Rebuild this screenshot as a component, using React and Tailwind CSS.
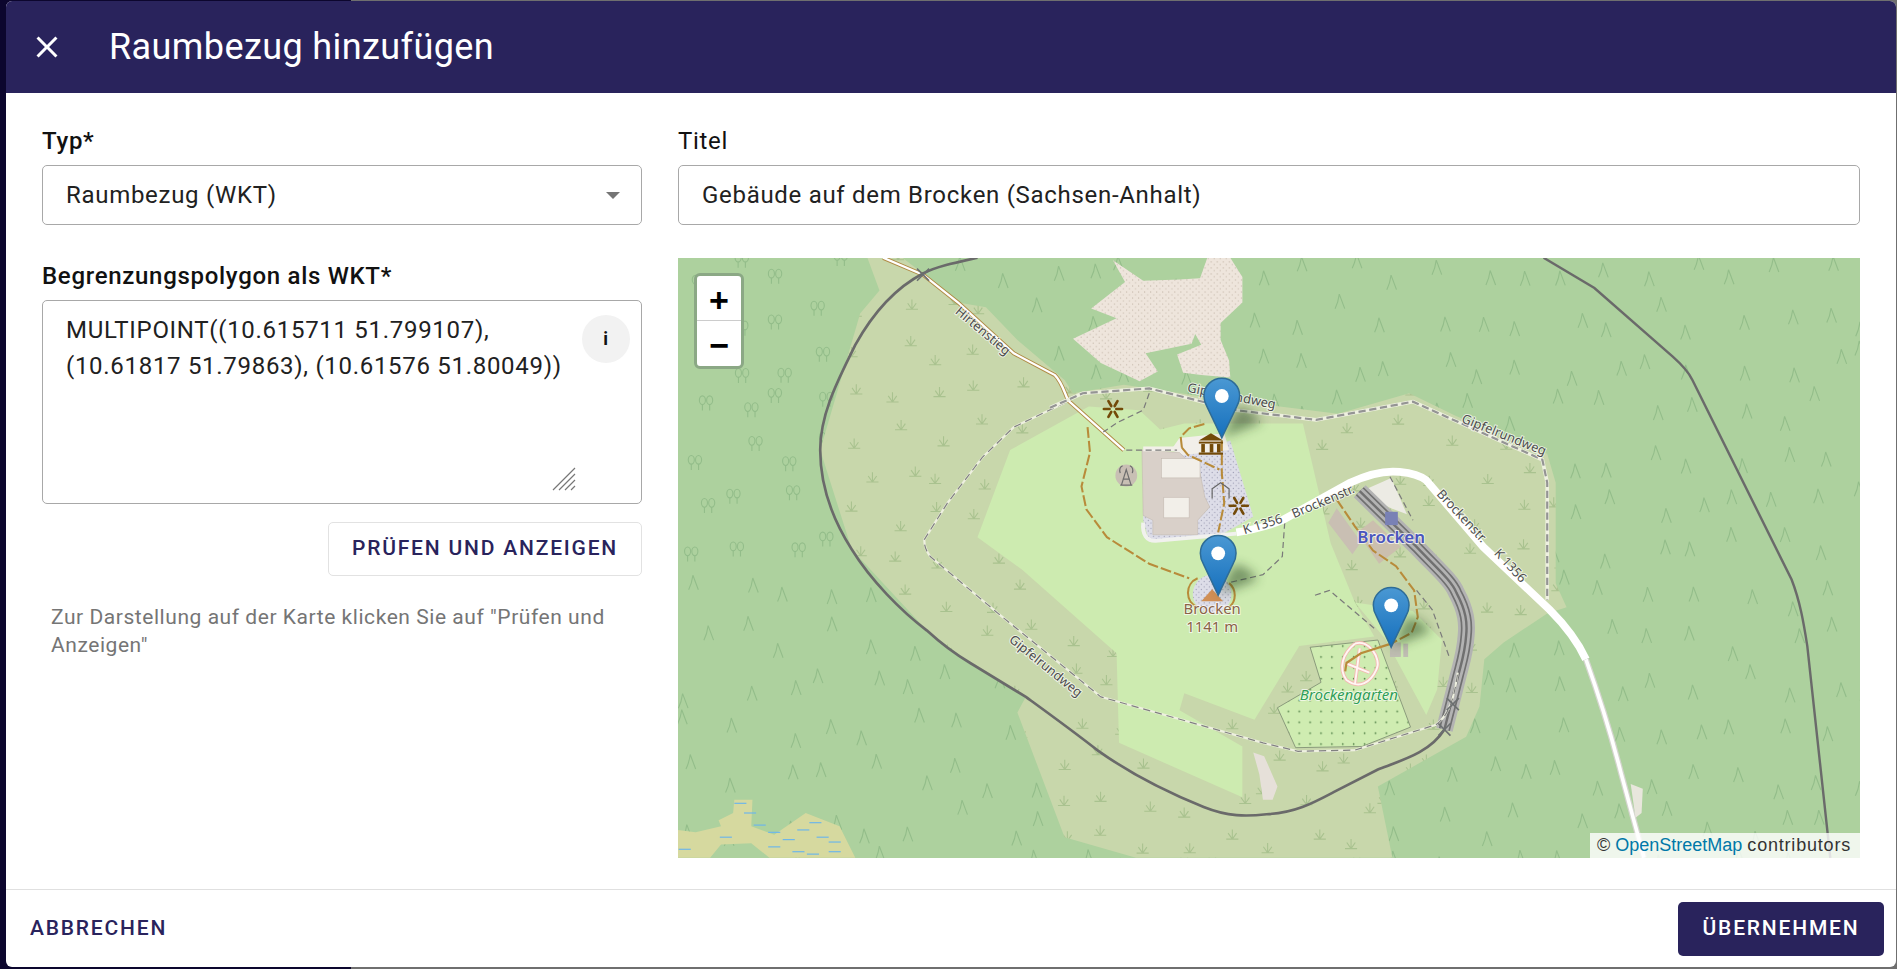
const rnd = (i, j, k) => {
  const s = Math.sin(i * 127.1 + j * 311.7 + k * 74.7) * 43758.5453;
  return s - Math.floor(s);
};

// scattered symbols of the forest and heath fill
const scatter = (stepX, stepY, seed) => {
  const out = [];
  for (let i = 0; i < 30; i++) {
    for (let j = 0; j < 15; j++) {
      out.push({
        key: i + '-' + j,
        x: 560 + i * stepX + rnd(i, j, seed) * stepX * 0.7,
        y: 205 + j * stepY + rnd(i, j, seed + 1) * stepY * 0.7,
      });
    }
  }
  return out;
};

const forest = scatter(36, 38, 1);
const heath = scatter(34, 34, 5);

const HEATH = '717,213 746,213 763,226 792,250 815,254 841,281 880,314 887,325 929,318 995,328 1058,336 1106,342 1165,325 1204,344 1279,375 1286,399 1286,482 1295,502 1279,507 1243,531 1227,545 1223,584 1212,609 1139,650 1151,709 939,709 880,692 841,589 848,576 802,548 766,521 704,454 678,372 707,273 711,259 727,240';
const ROCK = '920,215 930,233 902,255 923,263 887,280 910,300 942,315 957,307 947,292 985,284 988,276 993,285 973,293 978,308 993,310 1017,312 1016,298 1009,281 1009,267 1027,250 1027,229 1017,213 998,213 992,230 975,231 945,232';
const LIGHT = '835,372 900,336 942,339 959,355 979,350 1077,350 1100,449 1120,498 1136,526 1074,534 1037,595 979,573 975,587 1027,617 1027,659 925,614 923,540 845,471 808,444';
const BUILDING = '944,372 975,374 992,391 996,411 1000,419 990,430 990,442 953,442 953,430 945,426';
const PLAZA = '986,375 1017,364 1036,427 1006,444 950,448 945,430 945,372';
const GARDEN = '1083,535 1139,529 1166,601 1126,617 1071,618 1056,585 1092,564';

const BOUNDARY_W = 'M808 213 C790 217 775 220 763 226 C740 238 722 258 707 285 C695 310 678 340 678 372 C678 405 690 432 704 454 C720 480 745 505 766 521 C778 532 790 541 802 548 L848 576 C870 592 888 605 907 620 C935 640 965 655 995 667 C1015 675 1030 675 1047 673 C1070 672 1085 664 1102 655 L1139 636 C1160 628 1182 622 1194 603';
const BOUNDARY_E = 'M1276 213 L1318 238 L1383 295 C1392 303 1396 308 1399 314 L1481 479 C1488 497 1491 515 1494 534 L1513 709';
const RAIL = 'M1124 406 L1171 452 C1188 470 1200 480 1204 490 C1212 505 1213 515 1212 525 C1211 540 1208 548 1205 560 L1194 603';
const ROAD_A = 'M1022 440 C1035 438 1045 436 1060 430 L1116 399 C1135 390 1148 389 1157 390 C1168 391 1174 393 1179 397 L1226 452 L1281 504 C1295 518 1305 532 1311 545';
const ROAD_B = 'M1311 545 C1320 570 1330 600 1340 639 L1359 709';
const TRACK = 'M730 213 L763 227 L792 250 L838 292 L872 310 C878 316 880 325 883 331 L929 372';
const LOOP = 'M880 333 L838 353 L812 378 L783 416 L764 446 C764 452 766 456 769 460 L825 507 L910 576 L1044 614 L1073 621 L1120 620 L1187 599 C1200 590 1203 570 1205 556';
const NORTH = 'M868 337 L895 325 L950 321 L1022 339 L1088 347 L1168 332 L1275 380 L1279 399 L1279 496';
const GREY_PATHS = 'M950 325 L945 339 L924 349 L912 357 M931 372 L973 372 M1062 432 L1060 460 L1044 475 L1014 482 M1087 492 L1099 488 L1138 521 M1171 488 L1184 504 L1198 543 M1149 394 L1168 430';
const BROWN = 'M899 353 L901 374 L894 402 L898 421 L915 444 L950 466 L983 478 M977 370 L976 361 L983 354 L997 350 M977 370 L982 376 L1008 388 M1010 364 L1010 391 L1012 416 L1007 440 M1105 413 L1120 435 L1135 455 L1154 468 L1169 488 L1172 510 L1167 523 L1150 532';
const GARDEN_PATHS = 'M1120 532 C1132 528 1142 545 1138 553 C1133 564 1124 570 1113 562 C1106 552 1110 540 1120 532 M1112 548 L1132 556 M1124 536 L1120 566';

function Pin({ x, y, id }) {
  return (
    <g transform={`translate(${x - 15.5} ${y - 50.2}) scale(1.24)`}>
      <path d="M12.5 40.5 L23 20 C30 20 36 26 39 30 Z" fill="#24421f" opacity="0.5" filter="url(#blur)" />
      <path
        d="M12.5 .6C5.9 .6 .6 5.9 .6 12.5C.6 15 1.3 17.4 2.6 19.6L12.5 40.4L22.4 19.6C23.7 17.4 24.4 15 24.4 12.5C24.4 5.9 19.1 .6 12.5 .6Z"
        fill={`url(#${id})`}
        stroke="#2e6c97"
        strokeWidth="1"
      />
      <circle cx="12.5" cy="12.5" r="4.6" fill="#fff" />
    </g>
  );
}

function Star({ x, y }) {
  return (
    <g transform={`translate(${x} ${y})`} stroke="#734a08" strokeWidth="2.2" strokeLinecap="round">
      {[0, 60, 120, 180, 240, 300].map((a) => (
        <line key={a} x1="0" y1="-2.8" x2="0" y2="-7.5" transform={`rotate(${a + 30})`} />
      ))}
    </g>
  );
}

function Cross({ x, y }) {
  return (
    <g stroke="#6b6f70" strokeWidth="1.3">
      <line x1={x - 5} y1={y - 5} x2={x + 5} y2={y + 5} />
      <line x1={x - 5} y1={y + 5} x2={x + 5} y2={y - 5} />
    </g>
  );
}

function Label({ x, y, r = 0, children, size = 10.6, fill = '#4d4d4d', weight = 400, italic = false }) {
  return (
    <text
      transform={`translate(${x} ${y}) rotate(${r})`}
      textAnchor="middle"
      dominantBaseline="middle"
      fontFamily="'Noto Sans', 'DejaVu Sans', sans-serif"
      fontSize={size}
      fontWeight={weight}
      fontStyle={italic ? 'italic' : 'normal'}
      fill={fill}
      stroke="#ffffff"
      strokeOpacity="0.7"
      strokeWidth="1.6"
      paintOrder="stroke"
    >
      {children}
    </text>
  );
}

function MapDrawing() {
  return (
    <svg viewBox="560.5 213.2 977 496" className="block w-full h-full">
      <defs>
        <linearGradient id="pinA" x1="0" y1="0" x2="0" y2="1">
          <stop offset="0" stopColor="#4a98d3" />
          <stop offset="1" stopColor="#1670bd" />
        </linearGradient>
        <filter id="blur" x="-50%" y="-50%" width="200%" height="200%"><feGaussianBlur stdDeviation="3.4" /></filter>
        <pattern id="rockDots" width="5" height="5" patternUnits="userSpaceOnUse">
          <rect width="5" height="5" fill="#eee5dc" />
          <circle cx="1.2" cy="1.4" r="0.45" fill="#b9ab9b" />
          <circle cx="3.7" cy="3.6" r="0.45" fill="#b9ab9b" />
        </pattern>
        <pattern id="plazaDots" width="4.4" height="4.4" patternUnits="userSpaceOnUse">
          <rect width="4.4" height="4.4" fill="#dddde8" />
          <circle cx="1" cy="1.1" r="0.5" fill="#9c9cb3" />
          <circle cx="3.2" cy="3.3" r="0.5" fill="#9c9cb3" />
        </pattern>
        <pattern id="gardenDots" width="9" height="9" patternUnits="userSpaceOnUse">
          <rect width="9" height="9" fill="#cfecb1" />
          <circle cx="3" cy="3" r="0.7" fill="#4f7f45" />
        </pattern>
        <clipPath id="heathClip"><polygon points={HEATH} /></clipPath>
      </defs>

      <rect x="560" y="213" width="978" height="497" fill="#add19e" />

      {forest.map((p) =>
        p.x < 722 && p.y < 455 ? (
          <g key={p.key} transform={`translate(${p.x} ${p.y})`} fill="none" stroke="#93bd8a" strokeWidth="0.9">
            <ellipse cx="3" cy="3.6" rx="2.5" ry="3.6" />
            <ellipse cx="9" cy="3.6" rx="2.5" ry="3.6" />
            <path d="M3 7 V12 M9 7 V12" />
          </g>
        ) : (
          <path key={p.key} d={`M${p.x} ${p.y + 12} C${p.x + 2} ${p.y + 8} ${p.x + 3} ${p.y + 4} ${p.x + 3.5} ${p.y} L${p.x + 8} ${p.y + 12}`} fill="none" stroke="#93bd8a" strokeWidth="0.9" />
        )
      )}

      <polygon points={HEATH} fill="#c8d7ab" />
      <g clipPath="url(#heathClip)" fill="none" stroke="#a9c28f" strokeWidth="0.9">
        {heath.map((p) => (
          <path key={p.key} d={`M${p.x} ${p.y + 8} H${p.x + 10} M${p.x + 5} ${p.y + 8} V${p.y} M${p.x + 5} ${p.y + 8} L${p.x + 1.5} ${p.y + 3} M${p.x + 5} ${p.y + 8} L${p.x + 8.5} ${p.y + 3}`} />
        ))}
      </g>
      <polygon points={LIGHT} fill="#cdebb0" />
      <polygon points="1120,498 1168,505 1192,529 1188,570 1179,591 1145,528" fill="#cdebb0" />
      <polygon points={ROCK} fill="url(#rockDots)" />

      {/* wetland, bottom left */}
      <polygon points="607,661 622,661 621,683 640,690 666,672 694,683 707,709 636,709 621,697 596,698 587,709 560,709 560,686 575,688 596,683 594,678 606,672" fill="#d6d99f" />
      <g stroke="#6fb7e8" strokeWidth="1">
        {[[612, 664], [620, 672], [628, 682], [640, 688], [652, 694], [664, 686], [674, 680], [680, 692], [690, 696], [660, 704], [640, 700], [672, 706], [566, 702], [600, 692], [690, 704]].map(([x, y]) => (
          <line key={x + '-' + y} x1={x - 5} y1={y} x2={x + 5} y2={y} />
        ))}
      </g>

      {/* summit area, station and buildings */}
      <polygon points={PLAZA} fill="url(#plazaDots)" />
      <polygon points="975,362 1012,358 1016,372 978,376 968,372" fill="#f2efe9" />
      <polygon points={BUILDING} fill="#d9d0c9" stroke="#c4bab1" strokeWidth="0.5" />
      <rect x="945" y="369" width="30" height="4" fill="#f2efe9" />
      <rect x="960" y="379" width="32" height="16" fill="#f2efe9" stroke="#c4bab1" strokeWidth="0.5" />
      <rect x="962" y="411" width="21" height="17" fill="#f2efe9" stroke="#c4bab1" strokeWidth="0.5" />
      <path d="M945 432 C944 442 948 447 955 447 L1022 441" fill="none" stroke="#f1f1ee" strokeWidth="3.2" />
      <circle cx="1002" cy="491" r="16" fill="url(#plazaDots)" />
      <polygon points="1123,407 1150,395 1163,425 1150,420" fill="#ecebe4" />
      <polygon points="1105,420 1125,448 1118,458 1098,432" fill="#c9bfb3" />
      <polygon points="1135,430 1158,452 1140,466 1122,440" fill="#cbbfae" />

      <polygon points={GARDEN} fill="url(#gardenDots)" stroke="#7e8d72" strokeWidth="0.7" />
      <path d={GARDEN_PATHS} fill="none" stroke="#f3b9b1" strokeWidth="3" />
      <path d={GARDEN_PATHS} fill="none" stroke="#fff6f4" strokeWidth="1.6" />
      <polygon points="1036,622 1045,625 1056,650 1052,661 1044,661 1041,640" fill="#e6e0d9" />
      <rect x="1149" y="531" width="9" height="12" fill="#bfbdb2" />
      <rect x="1160" y="532" width="4" height="11" fill="#bfbdb2" />

      {/* railway */}
      <path d={RAIL} fill="none" stroke="#b3b3b3" strokeWidth="14" />
      <path d={RAIL} fill="none" stroke="#707070" strokeWidth="9.4" />
      <path d={RAIL} fill="none" stroke="#b3b3b3" strokeWidth="6.6" />
      <path d={RAIL} fill="none" stroke="#707070" strokeWidth="2" />

      {/* ways */}
      <path d={TRACK} fill="none" stroke="#b08a45" strokeWidth="3.4" />
      <path d={TRACK} fill="none" stroke="#ffffff" strokeWidth="1.9" />
      <path d={BOUNDARY_W} fill="none" stroke="#6a6a6a" strokeWidth="2.2" />
      <path d={BOUNDARY_E} fill="none" stroke="#6a6a6a" strokeWidth="2" />
      <path d={LOOP} fill="none" stroke="#eef0e0" strokeWidth="1.8" />
      <path d={LOOP} fill="none" stroke="#808080" strokeWidth="1" strokeDasharray="6 4" />
      <path d={NORTH} fill="none" stroke="#eef0e0" strokeWidth="3" />
      <path d={NORTH} fill="none" stroke="#949494" strokeWidth="1.8" strokeDasharray="6 3" />
      <path d={GREY_PATHS} fill="none" stroke="#7a7a7a" strokeWidth="1" strokeDasharray="5 3" />
      <path d={BROWN} fill="none" stroke="#b88b3a" strokeWidth="1.7" strokeDasharray="9 2.5" />
      <path d="M990 478 A13 13 0 0 0 990 502 M1016 482 A13 13 0 0 1 1016 502" fill="none" stroke="#b88b3a" strokeWidth="1.7" />
      <path d="M1150 532 L1125 540 L1113 548 L1112 555" fill="none" stroke="#b88b3a" strokeWidth="1.8" />
      <path d={ROAD_A} fill="none" stroke="#ffffff" strokeWidth="6.4" />
      <path d={ROAD_B} fill="none" stroke="#d5d5cf" strokeWidth="5" />
      <path d={ROAD_B} fill="none" stroke="#ffffff" strokeWidth="3" />
      <polygon points="1348,648 1358,652 1357,672 1352,676" fill="#e8e6dc" />
      <Cross x={763} y={227} />
      <Cross x={1201} y={582} />
      <Cross x={1194} y={603} />

      {/* map symbols */}
      <Star x={920} y={338} />
      <Star x={1024} y={418} />
      <g fill="#734a08">
        <polygon points="1001,358 1011,364 991,364" />
        <rect x="991" y="365" width="20" height="1.6" />
        <rect x="993" y="367" width="3" height="7" />
        <rect x="1000" y="367" width="3" height="7" />
        <rect x="1006" y="367" width="3" height="7" />
        <rect x="991" y="374" width="20" height="1.8" />
      </g>
      <circle cx="931" cy="393" r="9" fill="#c8bfb4" />
      <g fill="none" stroke="#6e6e6e" strokeWidth="1">
        <path d="M927 401 L931 388 L935 401 M926 401 H936 M928 396 H934" />
        <path d="M926 391 C925 388 926 386 928 385 M936 391 C937 388 936 386 934 385" />
      </g>
      <path d="M1003 416 V408 L1010 403 L1017 408 V416" transform="translate(-1 -4)" fill="none" stroke="#666" strokeWidth="1" />
      <polygon points="1002,487 1011,497 993,497" fill="#d08f55" />
      <rect x="1145" y="423" width="10.5" height="11" fill="#7981b5" />

      <Label x={812} y={274} r={40}>Hirtenstieg</Label>
      <Label x={1018} y={328} r={11}>Gipfelrundweg</Label>
      <Label x={1243} y={360} r={22}>Gipfelrundweg</Label>
      <Label x={864} y={551} r={39}>Gipfelrundweg</Label>
      <Label x={1044} y={434} r={-17}>K 1356</Label>
      <Label x={1094} y={415} r={-23}>Brockenstr.</Label>
      <Label x={1208} y={427} r={47}>Brockenstr.</Label>
      <Label x={1248} y={468} r={47}>K 1356</Label>
      <Label x={1150} y={445} size={14} fill="#4a55bd" weight={600}>Brocken</Label>
      <Label x={1002} y={504} size={12.3} fill="#8a6347">Brocken</Label>
      <Label x={1002} y={519} size={12.3} fill="#8a6347">1141 m</Label>
      <Label x={1115} y={575} size={12.5} fill="#2f9e57" italic>Brockengarten</Label>

      <Pin x={1010} y={362} id="pinA" />
      <Pin x={1007} y={492} id="pinA" />
      <Pin x={1150} y={535} id="pinA" />
    </svg>
  );
}

export default function App() {
  return (
    <div className="relative h-[969px] w-[1897px] overflow-hidden bg-[#6f6f6f] font-['Roboto',sans-serif] text-[#212121]">
      <div className="absolute inset-y-0 left-0 w-[351px] bg-[#0c062e]" />
      <div className="relative ml-[6px] mt-px flex h-[966px] w-[1890px] flex-col overflow-hidden rounded-[6px] bg-white">
        <div className="flex h-[92px] shrink-0 items-center bg-[#29235c] text-white">
          <svg width="36" height="36" viewBox="0 0 24 24" fill="currentColor" className="ml-[23px]">
            <path d="M19 6.41 17.59 5 12 10.59 6.41 5 5 6.41 10.59 12 5 17.59 6.41 19 12 13.41 17.59 19 19 17.59 13.41 12z" />
          </svg>
          <h1 className="ml-[44px] text-[36px] font-normal leading-none tracking-[0.4px]">Raumbezug hinzufügen</h1>
        </div>

        <div className="flex flex-1 gap-[36px] px-[36px] pt-[34px]">
          <div className="flex w-[600px] shrink-0 flex-col">
            <label className="text-[24px] font-medium leading-[28px] tracking-[0.7px] text-[#111]">Typ*</label>
            <div className="mt-[10px] flex h-[60px] items-center justify-between rounded-[5px] border border-[#a8a8a8] pl-[23px] pr-[21px] text-[24px] tracking-[0.7px]">
              <span>Raumbezug (WKT)</span>
              <span className="h-0 w-0 border-x-[7px] border-t-[7px] border-x-transparent border-t-[#757575]" />
            </div>

            <label className="mt-[37px] text-[24px] font-medium leading-[28px] tracking-[0.7px] text-[#111]">Begrenzungspolygon als WKT*</label>
            <div className="relative mt-[10px] h-[204px] rounded-[5px] border border-[#a8a8a8] pl-[23px] pr-[70px] pt-[11px] text-[24px] leading-[36px] tracking-[0.7px]">
              MULTIPOINT((10.615711 51.799107), (10.61817 51.79863), (10.61576 51.80049))
              <div className="absolute right-[11px] top-[14px] flex h-[48px] w-[48px] items-center justify-center rounded-full bg-[#f2f2f2] text-[18px] font-bold text-[#111]">i</div>
              <svg width="24" height="24" viewBox="0 0 24 24" className="absolute bottom-[12px] right-[65px]" stroke="#777" strokeWidth="1.2">
                <path d="M1 23 L23 1 M7 23 L23 7 M13 23 L23 13 M19 23 L23 19" />
              </svg>
            </div>

            <div className="mt-[18px] flex justify-end">
              <button className="h-[54px] w-[314px] rounded-[5px] border border-[#e2e2e2] bg-white text-[21px] font-medium tracking-[1.8px] text-[#29235c]">PRÜFEN UND ANZEIGEN</button>
            </div>
            <p className="mt-[27px] pl-[9px] text-[21px] leading-[28px] tracking-[0.55px] text-[#757575]">Zur Darstellung auf der Karte klicken Sie auf "Prüfen und Anzeigen"</p>
          </div>

          <div className="flex w-[1182px] shrink-0 flex-col">
            <label className="text-[24px] leading-[28px] tracking-[0.7px] text-[#111]">Titel</label>
            <div className="mt-[10px] flex h-[60px] items-center rounded-[5px] border border-[#a8a8a8] pl-[23px] text-[24px] tracking-[0.7px]">Gebäude auf dem Brocken (Sachsen-Anhalt)</div>
            <div className="relative mt-[33px] h-[600px] w-[1182px] overflow-hidden bg-[#add19e]">
              <MapDrawing />
              <div className="absolute left-[16px] top-[15px] w-[50px] rounded-[6px] border-[3px] border-[#8ba885] bg-white text-black">
                <div className="flex h-[45px] items-center justify-center border-b border-[#ccc] pt-[9px] font-['Liberation_Mono',monospace] text-[34px] font-bold leading-none">+</div>
                <div className="flex h-[45px] items-center justify-center pt-[9px] font-['Liberation_Mono',monospace] text-[34px] font-bold leading-none">−</div>
              </div>
              <div className="absolute bottom-0 right-0 flex h-[25px] w-[270px] items-center bg-white/80 pl-[7px] font-['Liberation_Sans',sans-serif] text-[18px] text-[#333]">
                © <span className="mx-[5px] text-[#0078a8]">OpenStreetMap</span> <span className="tracking-[0.8px]">contributors</span>
              </div>
            </div>
          </div>
        </div>

        <div className="flex h-[78px] shrink-0 items-center justify-between border-t border-[#e0e0e0] pl-[24px] pr-[12px]">
          <button className="text-[21px] font-medium tracking-[1.8px] text-[#29235c]">ABBRECHEN</button>
          <button className="h-[54px] w-[206px] rounded-[5px] bg-[#29235c] text-[21px] font-medium tracking-[1.8px] text-white">ÜBERNEHMEN</button>
        </div>
      </div>
    </div>
  );
}
